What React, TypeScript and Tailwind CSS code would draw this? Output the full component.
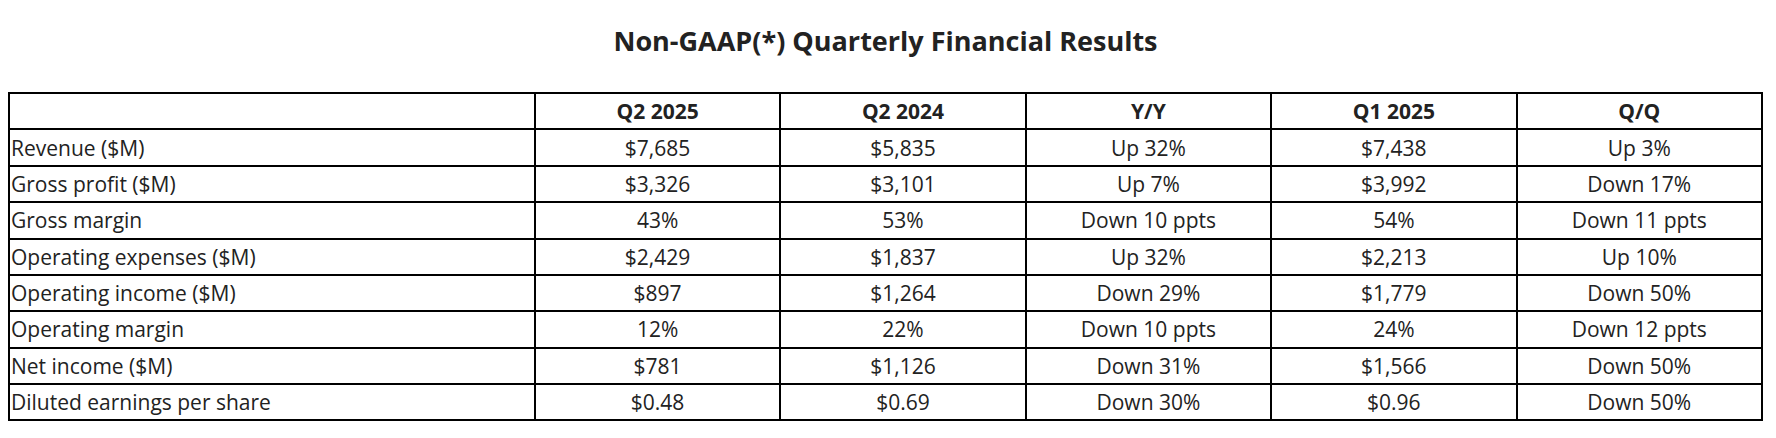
// Non-GAAP quarterly results table, rendered as a plain bordered HTML table.
const columns = ['Q2 2025', 'Q2 2024', 'Y/Y', 'Q1 2025', 'Q/Q'];

const rows: [string, string, string, string, string, string][] = [
  ['Revenue ($M)', '$7,685', '$5,835', 'Up 32%', '$7,438', 'Up 3%'],
  ['Gross profit ($M)', '$3,326', '$3,101', 'Up 7%', '$3,992', 'Down 17%'],
  ['Gross margin', '43%', '53%', 'Down 10 ppts', '54%', 'Down 11 ppts'],
  ['Operating expenses ($M)', '$2,429', '$1,837', 'Up 32%', '$2,213', 'Up 10%'],
  ['Operating income ($M)', '$897', '$1,264', 'Down 29%', '$1,779', 'Down 50%'],
  ['Operating margin', '12%', '22%', 'Down 10 ppts', '24%', 'Down 12 ppts'],
  ['Net income ($M)', '$781', '$1,126', 'Down 31%', '$1,566', 'Down 50%'],
  ['Diluted earnings per share', '$0.48', '$0.69', 'Down 30%', '$0.96', 'Down 50%'],
];

const cell = 'border-2 border-black px-[1px] py-[2.2px] leading-[30px]';

export default function App() {
  return (
    <div className="min-h-[438px] w-[1776px] bg-white text-[#222] font-['Open_Sans',sans-serif]">
      <div className="w-[1755px] ml-[8px] pt-[23px]">
        <h1 className="text-center text-[27px] font-bold leading-[36px]">
          Non-GAAP(*) Quarterly Financial Results
        </h1>
        <table className="mt-[33px] w-full table-fixed border-collapse text-[21px]">
          <colgroup>
            <col className="w-[30%]" />
            {columns.map((c) => (
              <col key={c} className="w-[14%]" />
            ))}
          </colgroup>
          <thead>
            <tr>
              <th className={cell}></th>
              {columns.map((c) => (
                <th key={c} className={`${cell} text-center font-bold`}>{c}</th>
              ))}
            </tr>
          </thead>
          <tbody>
            {rows.map(([label, ...vals]) => (
              <tr key={label}>
                <td className={`${cell} text-left`}>{label}</td>
                {vals.map((v, i) => (
                  <td key={i} className={`${cell} text-center`}>{v}</td>
                ))}
              </tr>
            ))}
          </tbody>
        </table>
      </div>
    </div>
  );
}
